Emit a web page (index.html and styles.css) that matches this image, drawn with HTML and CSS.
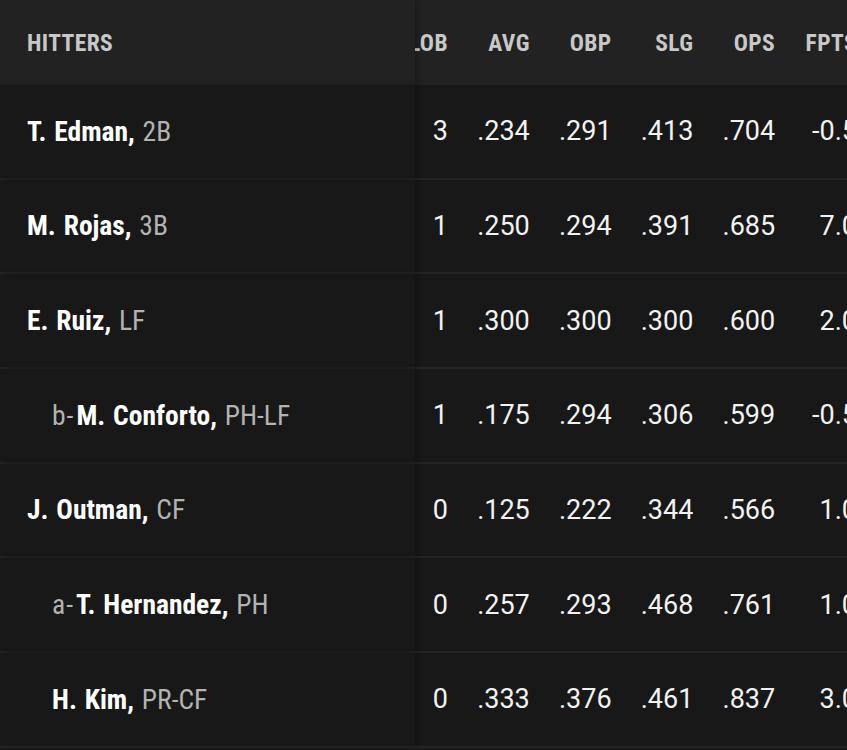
FILE: index.html
```html
<!DOCTYPE html>
<html>
<head>
<meta charset="utf-8">
<link rel="stylesheet" href="styles.css">
</head>
<body>
<div class="table">
  <div class="row head">
    <div class="name"><span>HITTERS</span></div>
    <div class="stats">
      <div class="cell lob">LOB</div>
      <div class="cell">AVG</div>
      <div class="cell">OBP</div>
      <div class="cell">SLG</div>
      <div class="cell">OPS</div>
      <div class="cell fpts">FPTS</div>
    </div>
  </div>
  <div class="row">
    <div class="name"><span><b>T. Edman,</b> <i>2B</i></span></div>
    <div class="stats">
      <div class="cell lob">3</div><div class="cell">.234</div><div class="cell">.291</div><div class="cell">.413</div><div class="cell">.704</div><div class="cell fpts">-0.5</div>
    </div>
  </div>
  <div class="row">
    <div class="name"><span><b>M. Rojas,</b> <i>3B</i></span></div>
    <div class="stats">
      <div class="cell lob">1</div><div class="cell">.250</div><div class="cell">.294</div><div class="cell">.391</div><div class="cell">.685</div><div class="cell fpts">7.0</div>
    </div>
  </div>
  <div class="row">
    <div class="name"><span><b>E. Ruiz,</b> <i>LF</i></span></div>
    <div class="stats">
      <div class="cell lob">1</div><div class="cell">.300</div><div class="cell">.300</div><div class="cell">.300</div><div class="cell">.600</div><div class="cell fpts">2.0</div>
    </div>
  </div>
  <div class="row">
    <div class="name sub"><span><i class="pre">b-</i><b>M. Conforto,</b> <i>PH-LF</i></span></div>
    <div class="stats">
      <div class="cell lob">1</div><div class="cell">.175</div><div class="cell">.294</div><div class="cell">.306</div><div class="cell">.599</div><div class="cell fpts">-0.5</div>
    </div>
  </div>
  <div class="row">
    <div class="name"><span><b>J. Outman,</b> <i>CF</i></span></div>
    <div class="stats">
      <div class="cell lob">0</div><div class="cell">.125</div><div class="cell">.222</div><div class="cell">.344</div><div class="cell">.566</div><div class="cell fpts">1.0</div>
    </div>
  </div>
  <div class="row">
    <div class="name sub"><span><i class="pre">a-</i><b>T. Hernandez,</b> <i>PH</i></span></div>
    <div class="stats">
      <div class="cell lob">0</div><div class="cell">.257</div><div class="cell">.293</div><div class="cell">.468</div><div class="cell">.761</div><div class="cell fpts">1.0</div>
    </div>
  </div>
  <div class="row">
    <div class="name sub"><span><b>H. Kim,</b> <i>PR-CF</i></span></div>
    <div class="stats">
      <div class="cell lob">0</div><div class="cell">.333</div><div class="cell">.376</div><div class="cell">.461</div><div class="cell">.837</div><div class="cell fpts">3.0</div>
    </div>
  </div>
</div>
</body>
</html>
```
FILE: styles.css
```css
html, body {
  margin: 0;
  padding: 0;
  background: #181818;
  overflow: hidden;
}
.table {
  width: 847px;
  overflow: hidden;
  font-family: Roboto, "Liberation Sans", sans-serif;
  color: #ffffff;
}
.row {
  display: flex;
  height: 92.67px;
  border-bottom: 2px solid #252525;
  background: #181818;
}
.row.head {
  height: 85px;
  border-bottom: none;
  background: #222222;
}
.name {
  flex: 0 0 415px;
  display: flex;
  align-items: center;
  padding-left: 27px;
  box-sizing: border-box;
  font-stretch: 75%;
  font-size: 27.5px;
  word-spacing: 1.5px;
  white-space: pre;
  background: inherit;
  position: relative;
  z-index: 1;
  box-shadow: 3px 0 5px rgba(0, 0, 0, 0.22);
}
.name.sub {
  padding-left: 52px;
}
.name b {
  font-weight: 700;
  color: #ffffff;
}
.name i {
  font-style: normal;
  font-weight: 400;
  color: #b3b3b3;
}
.name i.pre {
  letter-spacing: 1px;
  margin-right: 2px;
}
.head .name {
  font-weight: 700;
  font-size: 23.5px;
  letter-spacing: 0.4px;
  color: #c8c8c8;
}
.stats {
  display: flex;
  flex: 0 0 auto;
}
.cell {
  flex: 0 0 81.8px;
  display: flex;
  align-items: center;
  justify-content: flex-end;
  overflow: hidden;
  white-space: nowrap;
  font-size: 27px;
  font-weight: 400;
  color: #f2f2f2;
}
.cell.lob {
  flex-basis: 33px;
}
.head .cell {
  font-stretch: 75%;
  font-weight: 700;
  font-size: 23.5px;
  letter-spacing: 0.4px;
  color: #c8c8c8;
}
```
